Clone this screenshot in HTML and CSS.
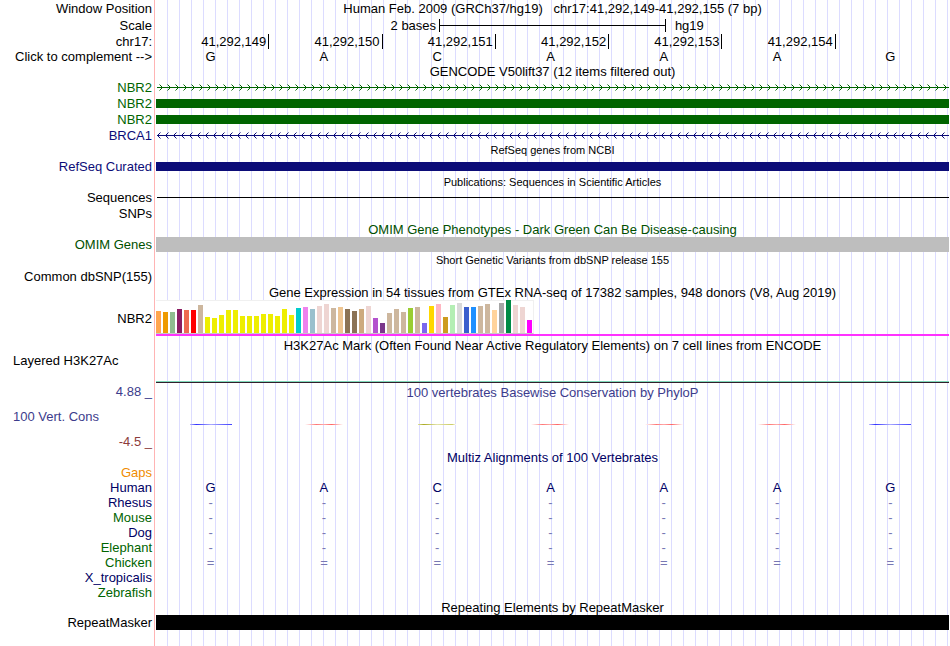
FILE: index.html
```
<!DOCTYPE html>
<html lang="en">
<head>
    <meta charset="UTF-8">
    <meta name="viewport" content="width=device-width, initial-scale=1.0">
    <title>chr17:41,292,149-41,292,155</title>
    <link rel="stylesheet" href="styles.css">
</head>
<body>
<main class="browser">
    <div class="row row-tall">
        <span class="label">Window Position</span>
        <div class="title">Human Feb. 2009 (GRCh37/hg19) &nbsp; chr17:41,292,149-41,292,155 (7 bp)</div>
    </div>
    <div class="row row-tall">
        <span class="label">Scale</span>
        <div class="scale">
            <span class="scale-size">2 bases</span>
            <span class="scale-bar"></span>
            <span class="scale-db">hg19</span>
        </div>
    </div>
    <div class="row row-short">
        <span class="label">chr17:</span>
        <div class="ruler">
            <span>41,292,149</span><span>41,292,150</span><span>41,292,151</span><span>41,292,152</span><span>41,292,153</span><span>41,292,154</span>
        </div>
    </div>
    <div class="row row-short">
        <button class="label" type="button">Click to complement --&gt;</button>
        <div class="bases"><span>G</span><span>A</span><span>C</span><span>A</span><span>A</span><span>A</span><span>G</span></div>
    </div>

    <div class="row row-short">
        <div class="title">GENCODE V50lift37 (12 items filtered out)</div>
    </div>
    <div class="row green">
        <span class="label">NBR2</span>
        <svg class="intron" height="7">
            <defs>
                <pattern id="arrows-right" width="8" height="7" patternUnits="userSpaceOnUse">
                    <path d="M3.5 .5 L6.5 3.5 L3.5 6.5" />
                </pattern>
            </defs>
            <rect x="1" y="3" width="100%" height="1" />
            <rect width="100%" height="7" fill="url(#arrows-right)" />
        </svg>
    </div>
    <div class="row green">
        <span class="label">NBR2</span>
        <div class="exon"></div>
    </div>
    <div class="row green">
        <span class="label">NBR2</span>
        <div class="exon"></div>
    </div>
    <div class="row blue">
        <span class="label">BRCA1</span>
        <svg class="intron" height="7">
            <defs>
                <pattern id="arrows-left" width="8" height="7" patternUnits="userSpaceOnUse">
                    <path d="M4.5 .5 L1.5 3.5 L4.5 6.5" />
                </pattern>
            </defs>
            <rect x="1" y="3" width="100%" height="1" />
            <rect width="100%" height="7" fill="url(#arrows-left)" />
        </svg>
    </div>

    <div class="row row-short">
        <div class="title small">RefSeq genes from NCBI</div>
    </div>
    <div class="row blue">
        <span class="label">RefSeq Curated</span>
        <div class="exon"></div>
    </div>

    <div class="row row-title">
        <div class="title small">Publications: Sequences in Scientific Articles</div>
    </div>
    <div class="row row-short">
        <span class="label">Sequences</span>
        <div class="line"></div>
    </div>
    <div class="row">
        <span class="label">SNPs</span>
    </div>

    <div class="row row-title omim">
        <div class="title">OMIM Gene Phenotypes - Dark Green Can Be Disease-causing</div>
    </div>
    <div class="row row-short omim">
        <span class="label">OMIM Genes</span>
        <div class="block gray"></div>
    </div>

    <div class="row row-title">
        <div class="title small">Short Genetic Variants from dbSNP release 155</div>
    </div>
    <div class="row">
        <span class="label">Common dbSNP(155)</span>
    </div>

    <div class="row">
        <div class="title">Gene Expression in 54 tissues from GTEx RNA-seq of 17382 samples, 948 donors (V8, Aug 2019)</div>
    </div>
    <div class="row row-gtex">
        <span class="label">NBR2</span>
        <div class="gtex"><div class="gtex-bars" id="gtex-bars"></div></div>
    </div>

    <div class="row row-tall row-title">
        <div class="title">H3K27Ac Mark (Often Found Near Active Regulatory Elements) on 7 cell lines from ENCODE</div>
    </div>
    <div class="row row-h3k27ac">
        <span class="label label-left">Layered H3K27Ac</span>
        <div class="signal"></div>
    </div>

    <div class="row row-cons">
        <div class="cons-labels">
            <span class="limit">4.88 _</span>
            <span class="label-left">100 Vert. Cons</span>
            <span class="limit negative">-4.5 _</span>
        </div>
        <div class="cons">
            <div class="title">100 vertebrates Basewise Conservation by PhyloP</div>
            <div class="bases">
                <i class="wiggle wiggle-g"></i><i class="wiggle wiggle-a"></i><i class="wiggle wiggle-c"></i><i class="wiggle wiggle-a"></i><i class="wiggle wiggle-a"></i><i class="wiggle wiggle-a"></i><i class="wiggle wiggle-g"></i>
            </div>
        </div>
    </div>

    <section class="multiz">
        <div class="row row-short">
            <div class="title">Multiz Alignments of 100 Vertebrates</div>
        </div>
        <div class="row row-short">
            <span class="label gaps">Gaps</span>
        </div>
        <div class="row row-short">
            <span class="label">Human</span>
            <div class="bases"><span>G</span><span>A</span><span>C</span><span>A</span><span>A</span><span>A</span><span>G</span></div>
        </div>
        <div class="row row-short">
            <span class="label">Rhesus</span>
            <div class="bases faded"><span>-</span><span>-</span><span>-</span><span>-</span><span>-</span><span>-</span><span>-</span></div>
        </div>
        <div class="row row-short">
            <span class="label alt">Mouse</span>
            <div class="bases faded"><span>-</span><span>-</span><span>-</span><span>-</span><span>-</span><span>-</span><span>-</span></div>
        </div>
        <div class="row row-short">
            <span class="label">Dog</span>
            <div class="bases faded"><span>-</span><span>-</span><span>-</span><span>-</span><span>-</span><span>-</span><span>-</span></div>
        </div>
        <div class="row row-short">
            <span class="label alt">Elephant</span>
            <div class="bases faded"><span>-</span><span>-</span><span>-</span><span>-</span><span>-</span><span>-</span><span>-</span></div>
        </div>
        <div class="row row-short">
            <span class="label alt">Chicken</span>
            <div class="bases faded"><span>=</span><span>=</span><span>=</span><span>=</span><span>=</span><span>=</span><span>=</span></div>
        </div>
        <div class="row row-short">
            <span class="label">X_tropicalis</span>
        </div>
        <div class="row row-short">
            <span class="label alt">Zebrafish</span>
        </div>
    </section>

    <div class="row row-short">
        <div class="title">Repeating Elements by RepeatMasker</div>
    </div>
    <div class="row row-short">
        <span class="label">RepeatMasker</span>
        <div class="block"></div>
    </div>
</main>
<script src="script.js"></script>
</body>
</html>
```
FILE: styles.css
```
html, body {
    margin: 0;
    padding: 0;
    background-color: #fff;
}
.browser {
    box-sizing: border-box;
    min-height: 100vh;
    padding: 0 1px 16px 0;
    font-family: "Liberation Sans", Arial, sans-serif;
    font-size: 13px;
    line-height: 15px;
    color: #000;
    /* red divider, then a guide line every 12px */
    background-image:
        linear-gradient(#ffb4b4, #ffb4b4),
        repeating-linear-gradient(to right, transparent 0, transparent 11px, #dcdcff 11px, #dcdcff 12px);
    background-repeat: no-repeat;
    background-position: 154px 0, 156px 0;
    background-size: 1px 100%, 100% 100%;
}
.row {
    display: grid;
    grid-template-columns: 152px minmax(0, 1fr);
    column-gap: 4px;
    align-items: center;
    height: 16px;
}
.row > :not(.label) {
    grid-column: 2;
}
.row-tall {
    height: 17px;
}
.row-short {
    height: 15px;
}
.row-title {
    align-items: end;
}
.label {
    text-align: right;
    white-space: nowrap;
}
button.label {
    padding: 0;
    border: 0;
    background: none;
    font: inherit;
    color: inherit;
    cursor: pointer;
}
.label-left {
    padding-left: 13px;
    text-align: left;
}
.title {
    text-align: center;
    white-space: nowrap;
}
.small {
    font-size: 11px;
}
.green {
    color: #006400;
}
.blue {
    color: #0c0c78;
}
.omim {
    color: #005000;
}

/* ruler */
.scale {
    display: grid;
    grid-template-columns: 1fr 28.6% 1fr;
    align-items: center;
}
.scale-size {
    padding-right: 3px;
    text-align: right;
}
.scale-bar {
    height: 13px;
    border: solid #000;
    border-width: 0 1px;
    background: linear-gradient(#000, #000) center / 100% 1px no-repeat;
}
.scale-db {
    padding-left: 9px;
}
.ruler, .bases {
    display: grid;
    grid-template-columns: repeat(7, 1fr);
}
.ruler span {
    padding-right: 2px;
    border-right: 1px solid #000;
    text-align: right;
}
.bases {
    padding-right: 2px;
    margin-left: -2px;
    justify-items: center;
}

/* genes */
.intron {
    display: block;
    width: 100%;
    fill: currentColor;
}
.intron path {
    fill: none;
    stroke: currentColor;
    stroke-width: 1;
}
.exon {
    height: 9px;
    background-color: currentColor;
}
.line {
    height: 1px;
    margin-left: 1px;
    background-color: #000;
}
.block {
    height: 15px;
    background-color: #000;
}
.gray {
    background-color: #bebebe;
}

/* expression graph */
.row-gtex {
    height: 36px;
}
.gtex {
    border-bottom: 2px solid #ff32ff;
}
.gtex-bars {
    display: flex;
    align-items: flex-end;
    gap: 2px;
    box-sizing: border-box;
    width: 378px;
    height: 34px;
    border-top: 1px solid #f0f0f0;
    border-right: 1px solid #f0f0f0;
    border-bottom: 1px solid #c8c8c8;
    background-color: #fff;
}
.gtex-bars i {
    flex: none;
    width: 5px;
}

/* signal tracks */
.row-h3k27ac {
    height: 30px;
}
.row-h3k27ac .label {
    align-self: start;
}
.signal {
    align-self: end;
    height: 1px;
    border-top: 1px solid #7fd8b8;
    background-color: #32202c;
}
.row-cons {
    height: 67px;
    color: #3c3c8c;
}
.row-cons > .cons-labels {
    grid-column: 1;
}
.cons-labels {
    display: flex;
    flex-direction: column;
    justify-content: space-between;
    height: 65px;
}
.limit {
    text-align: right;
}
.negative {
    color: #8c3c3c;
}
.cons {
    display: grid;
    row-gap: 24px;
    align-self: start;
    padding-top: 2px;
}
.wiggle {
    width: 38px;
    height: 1px;
}
.wiggle-g {
    width: 42px;
    background-image: linear-gradient(to right, #bbf, #33f 15%, #aaf 50%, #66f 80%, #44f);
}
.wiggle-a {
    background-image: linear-gradient(to right, #fff, #f77 30%, #faa 50%, #f66 70%, #fff);
}
.wiggle-c {
    background-image: linear-gradient(to right, #dde099, #aaaa22 15%, #e4e4aa 50%, #cccc66 90%, #fff);
}

/* alignments */
.multiz {
    color: #000064;
}
.alt {
    color: #006400;
}
.gaps {
    color: #f08c00;
}
.faded {
    color: #7878b4;
}
```
FILE: script.js
```
// median expression per tissue: [bar colour, height in px]
const tissues = [
    ['#ffa54f', 22], ['#ee9a00', 21], ['#8fbc8f', 21], ['#8b1c62', 24], ['#ee6a50', 23], ['#ff0000', 23],
    ['#cdb79e', 28], ['#eeee00', 16], ['#eeee00', 15], ['#eeee00', 18], ['#eeee00', 23], ['#eeee00', 23],
    ['#eeee00', 17], ['#eeee00', 17], ['#eeee00', 17], ['#eeee00', 19], ['#eeee00', 19], ['#eeee00', 17],
    ['#eeee00', 24], ['#eeee00', 18], ['#00cdcd', 25], ['#ee82ee', 26], ['#9ac0cd', 24], ['#eed5d2', 27],
    ['#eed5d2', 29], ['#cdb79e', 25], ['#eec591', 26], ['#8b7355', 24], ['#8b7355', 22], ['#cdaa7d', 24],
    ['#eed5d2', 27], ['#b452cd', 15], ['#7a378b', 10], ['#cdb79e', 20], ['#cdb79e', 24], ['#cdb79e', 21],
    ['#9acd32', 25], ['#cdb79e', 26], ['#7a67ee', 10], ['#ffd700', 27], ['#ffb6c1', 29], ['#cd9b1d', 16],
    ['#b4eeb4', 28], ['#d9d9d9', 30], ['#3a5fcd', 26], ['#1e90ff', 26], ['#cdb79e', 27], ['#cdb79e', 29],
    ['#ffd39b', 23], ['#a6a6a6', 30], ['#008b45', 33], ['#eed5d2', 28], ['#eed5d2', 26], ['#ff00ff', 13]
];

const bars = document.getElementById('gtex-bars');

tissues.forEach(([color, height]) => {
    const bar = document.createElement('i');
    bar.style.backgroundColor = color;
    bar.style.height = `${height}px`;
    bars.appendChild(bar);
});
```
